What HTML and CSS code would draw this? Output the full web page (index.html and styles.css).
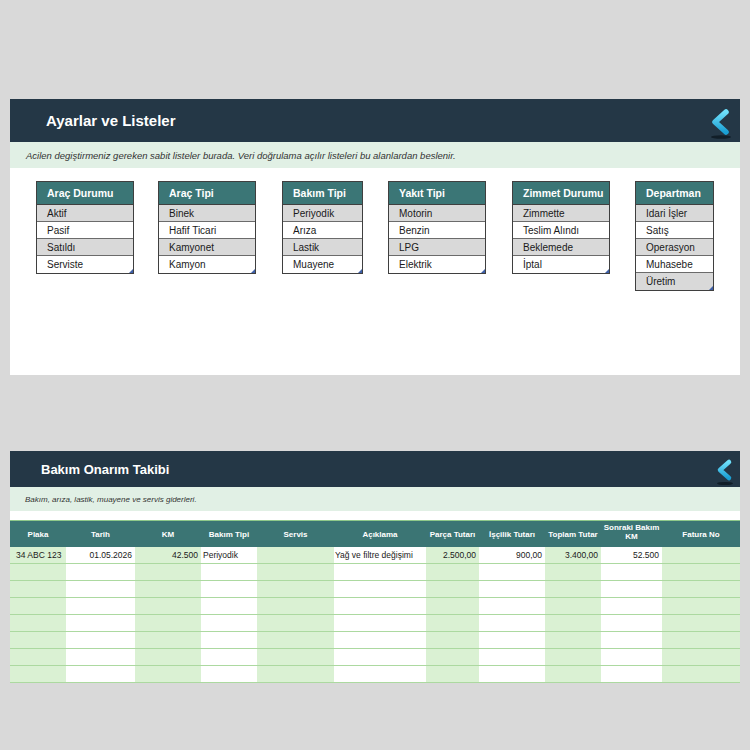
FILE: index.html
```html
<!DOCTYPE html>
<html lang="tr">
<head>
<meta charset="utf-8">
<link rel="stylesheet" href="styles.css">
</head>
<body>
<div class="page">
  <section class="panel panel-top">
    <header class="bar bar-top">
      <h1 class="title">Ayarlar ve Listeler</h1>
      <svg class="back back-top" width="24" height="32" viewBox="0 0 24 32">
        <defs><linearGradient id="g1" x1="0" y1="0" x2="0" y2="1"><stop offset="0" stop-color="#6fe0fb"/><stop offset="1" stop-color="#1a9fd3"/></linearGradient></defs>
        <ellipse cx="13" cy="29" rx="10" ry="1.8" fill="#0d1820" opacity="0.8"/>
        <polyline points="18,4 7,14 18,24" fill="none" stroke="url(#g1)" stroke-width="5.5" stroke-linecap="round" stroke-linejoin="round"/>
      </svg>
    </header>
    <p class="sub sub-top">Acilen degiştirmeniz gereken sabit listeler burada. Veri doğrulama açılır listeleri bu alanlardan beslenir.</p>
    <div class="lists">
      <div class="list w98"><div class="lh">Araç Durumu</div><div class="li g">Aktif</div><div class="li">Pasif</div><div class="li g">Satıldı</div><div class="li">Serviste</div></div>
      <div class="list w98"><div class="lh">Araç Tipi</div><div class="li g">Binek</div><div class="li">Hafif Ticari</div><div class="li g">Kamyonet</div><div class="li">Kamyon</div></div>
      <div class="list w81"><div class="lh">Bakım Tipi</div><div class="li g">Periyodik</div><div class="li">Arıza</div><div class="li g">Lastik</div><div class="li">Muayene</div></div>
      <div class="list w98"><div class="lh">Yakıt Tipi</div><div class="li g">Motorin</div><div class="li">Benzin</div><div class="li g">LPG</div><div class="li">Elektrik</div></div>
      <div class="list w98"><div class="lh">Zimmet Durumu</div><div class="li g">Zimmette</div><div class="li">Teslim Alındı</div><div class="li g">Beklemede</div><div class="li">İptal</div></div>
      <div class="list w79"><div class="lh">Departman</div><div class="li g">Idari İşler</div><div class="li">Satış</div><div class="li g">Operasyon</div><div class="li">Muhasebe</div><div class="li g">Üretim</div></div>
    </div>
  </section>

  <section class="panel panel-bottom">
    <header class="bar bar-bottom">
      <h2 class="title title-sm">Bakım Onarım Takibi</h2>
      <svg class="back back-bottom" width="20" height="28" viewBox="0 0 20 28">
        <defs><linearGradient id="g2" x1="0" y1="0" x2="0" y2="1"><stop offset="0" stop-color="#6fe0fb"/><stop offset="1" stop-color="#1a9fd3"/></linearGradient></defs>
        <ellipse cx="11" cy="25.5" rx="8" ry="1.6" fill="#0d1820" opacity="0.8"/>
        <polyline points="15,4 6,12 15,20" fill="none" stroke="url(#g2)" stroke-width="4.5" stroke-linecap="round" stroke-linejoin="round"/>
      </svg>
    </header>
    <p class="sub sub-bottom">Bakım, arıza, lastik, muayene ve servis giderleri.</p>
    <div class="gap"></div>
    <div class="table">
      <div class="th">Plaka</div><div class="th">Tarih</div><div class="th">KM</div><div class="th">Bakım Tipi</div><div class="th">Servis</div><div class="th">Açıklama</div><div class="th">Parça Tutarı</div><div class="th">İşçilik Tutarı</div><div class="th">Toplam Tutar</div><div class="th wrap">Sonraki Bakım KM</div><div class="th">Fatura No</div>

      <div class="td g l">34 ABC 123</div><div class="td r">01.05.2026</div><div class="td g r">42.500</div><div class="td l">Periyodik</div><div class="td g"></div><div class="td l">Yağ ve filtre değişimi</div><div class="td g r">2.500,00</div><div class="td r">900,00</div><div class="td g r">3.400,00</div><div class="td r">52.500</div><div class="td g"></div>

      <div class="td g"></div><div class="td"></div><div class="td g"></div><div class="td"></div><div class="td g"></div><div class="td"></div><div class="td g"></div><div class="td"></div><div class="td g"></div><div class="td"></div><div class="td g"></div>
      <div class="td g"></div><div class="td"></div><div class="td g"></div><div class="td"></div><div class="td g"></div><div class="td"></div><div class="td g"></div><div class="td"></div><div class="td g"></div><div class="td"></div><div class="td g"></div>
      <div class="td g"></div><div class="td"></div><div class="td g"></div><div class="td"></div><div class="td g"></div><div class="td"></div><div class="td g"></div><div class="td"></div><div class="td g"></div><div class="td"></div><div class="td g"></div>
      <div class="td g"></div><div class="td"></div><div class="td g"></div><div class="td"></div><div class="td g"></div><div class="td"></div><div class="td g"></div><div class="td"></div><div class="td g"></div><div class="td"></div><div class="td g"></div>
      <div class="td g"></div><div class="td"></div><div class="td g"></div><div class="td"></div><div class="td g"></div><div class="td"></div><div class="td g"></div><div class="td"></div><div class="td g"></div><div class="td"></div><div class="td g"></div>
      <div class="td g"></div><div class="td"></div><div class="td g"></div><div class="td"></div><div class="td g"></div><div class="td"></div><div class="td g"></div><div class="td"></div><div class="td g"></div><div class="td"></div><div class="td g"></div>
      <div class="td g"></div><div class="td"></div><div class="td g"></div><div class="td"></div><div class="td g"></div><div class="td"></div><div class="td g"></div><div class="td"></div><div class="td g"></div><div class="td"></div><div class="td g"></div>
    </div>
  </section>
</div>
</body>
</html>
```

FILE: styles.css
```css
* { box-sizing: border-box; }
html, body { margin: 0; padding: 0; }
body {
  background: #d9d9d9;
  font-family: "Liberation Sans", Arial, sans-serif;
  width: 750px;
  height: 750px;
  overflow: hidden;
}
.page {
  padding: 99px 10px 0 10px;
  display: flex;
  flex-direction: column;
  gap: 76px;
}
.panel {
  width: 730px;
  background: #ffffff;
  display: flex;
  flex-direction: column;
}
.panel-top { height: 276px; }
.bar {
  background: #243746;
  display: flex;
  align-items: center;
  justify-content: space-between;
}
.bar-top { height: 43px; padding: 0 8px 0 36px; }
.bar-bottom { height: 36px; padding: 0 6px 0 31px; }
.title {
  margin: 0;
  color: #ffffff;
  font-size: 15px;
  font-weight: bold;
}
.title-sm { font-size: 13px; }
.back { display: block; }
.back-top { margin-top: 6px; }
.back-bottom { margin-top: 6px; }
.sub {
  margin: 0;
  background: #e1f0e5;
  color: #333333;
  font-style: italic;
  display: flex;
  align-items: center;
}
.sub-top { height: 26px; padding-left: 16px; font-size: 9.5px; }
.sub-bottom { height: 24px; padding-left: 15px; font-size: 8px; }
.lists {
  display: flex;
  align-items: flex-start;
  padding: 13px 0 0 26px;
  gap: 25px;
}
.lists .list:nth-child(1) { margin-right: -1px; }
.lists .list:nth-child(3) { margin-left: 1px; }
.lists .list:nth-child(5) { margin-left: 1px; }
.list {
  border: 1px solid #3f3f3f;
  position: relative;
  display: flex;
  flex-direction: column;
}
.list::after {
  content: "";
  position: absolute;
  right: 0;
  bottom: 0;
  width: 0;
  height: 0;
  border-left: 4px solid transparent;
  border-bottom: 4px solid #3d5ea6;
}
.w98 { width: 98px; }
.w81 { width: 81px; }
.w79 { width: 79px; }
.lh {
  height: 23px;
  background: #3b7676;
  color: #ffffff;
  font-weight: bold;
  font-size: 10.5px;
  display: flex;
  align-items: center;
  padding-left: 10px;
  border-bottom: 1px solid #3f3f3f;
}
.li {
  height: 17px;
  font-size: 10px;
  color: #1a1a1a;
  display: flex;
  align-items: center;
  padding-left: 10px;
  background: #ffffff;
  border-bottom: 1px solid #6b6b6b;
}
.li:last-child { border-bottom: none; }
.li.g { background: #d9d9d9; }
.gap { height: 9px; }
.table {
  display: grid;
  grid-template-columns: 56px 69px 66px 56px 77px 92px 53px 66px 56px 61px 78px;
  grid-auto-rows: 17px;
  grid-template-rows: 27px;
}
.th {
  background: #3b7574;
  border-top: 1px solid #8fc98a;
  color: #ffffff;
  font-weight: bold;
  font-size: 8px;
  text-align: center;
  display: flex;
  align-items: center;
  justify-content: center;
  line-height: 9px;
  padding: 0;
  white-space: nowrap;
}
.th.wrap { white-space: normal; padding: 0 1px; align-items: flex-start; padding-top: 2px; }
.td {
  background: #ffffff;
  border-bottom: 1px solid #acd9a0;
  font-size: 8.5px;
  color: #1a1a1a;
  display: flex;
  align-items: center;
  white-space: nowrap;
  overflow: hidden;
}
.td.g { background: #daf1d3; }
.td.l { padding-left: 5px; justify-content: flex-start; }
.td.r { padding-right: 3px; justify-content: flex-end; }
.table .td:nth-child(12) { padding-left: 6px; }
.table .td:nth-child(15) { padding-left: 2px; }
.table .td:nth-child(17) { padding-left: 1px; }
```
